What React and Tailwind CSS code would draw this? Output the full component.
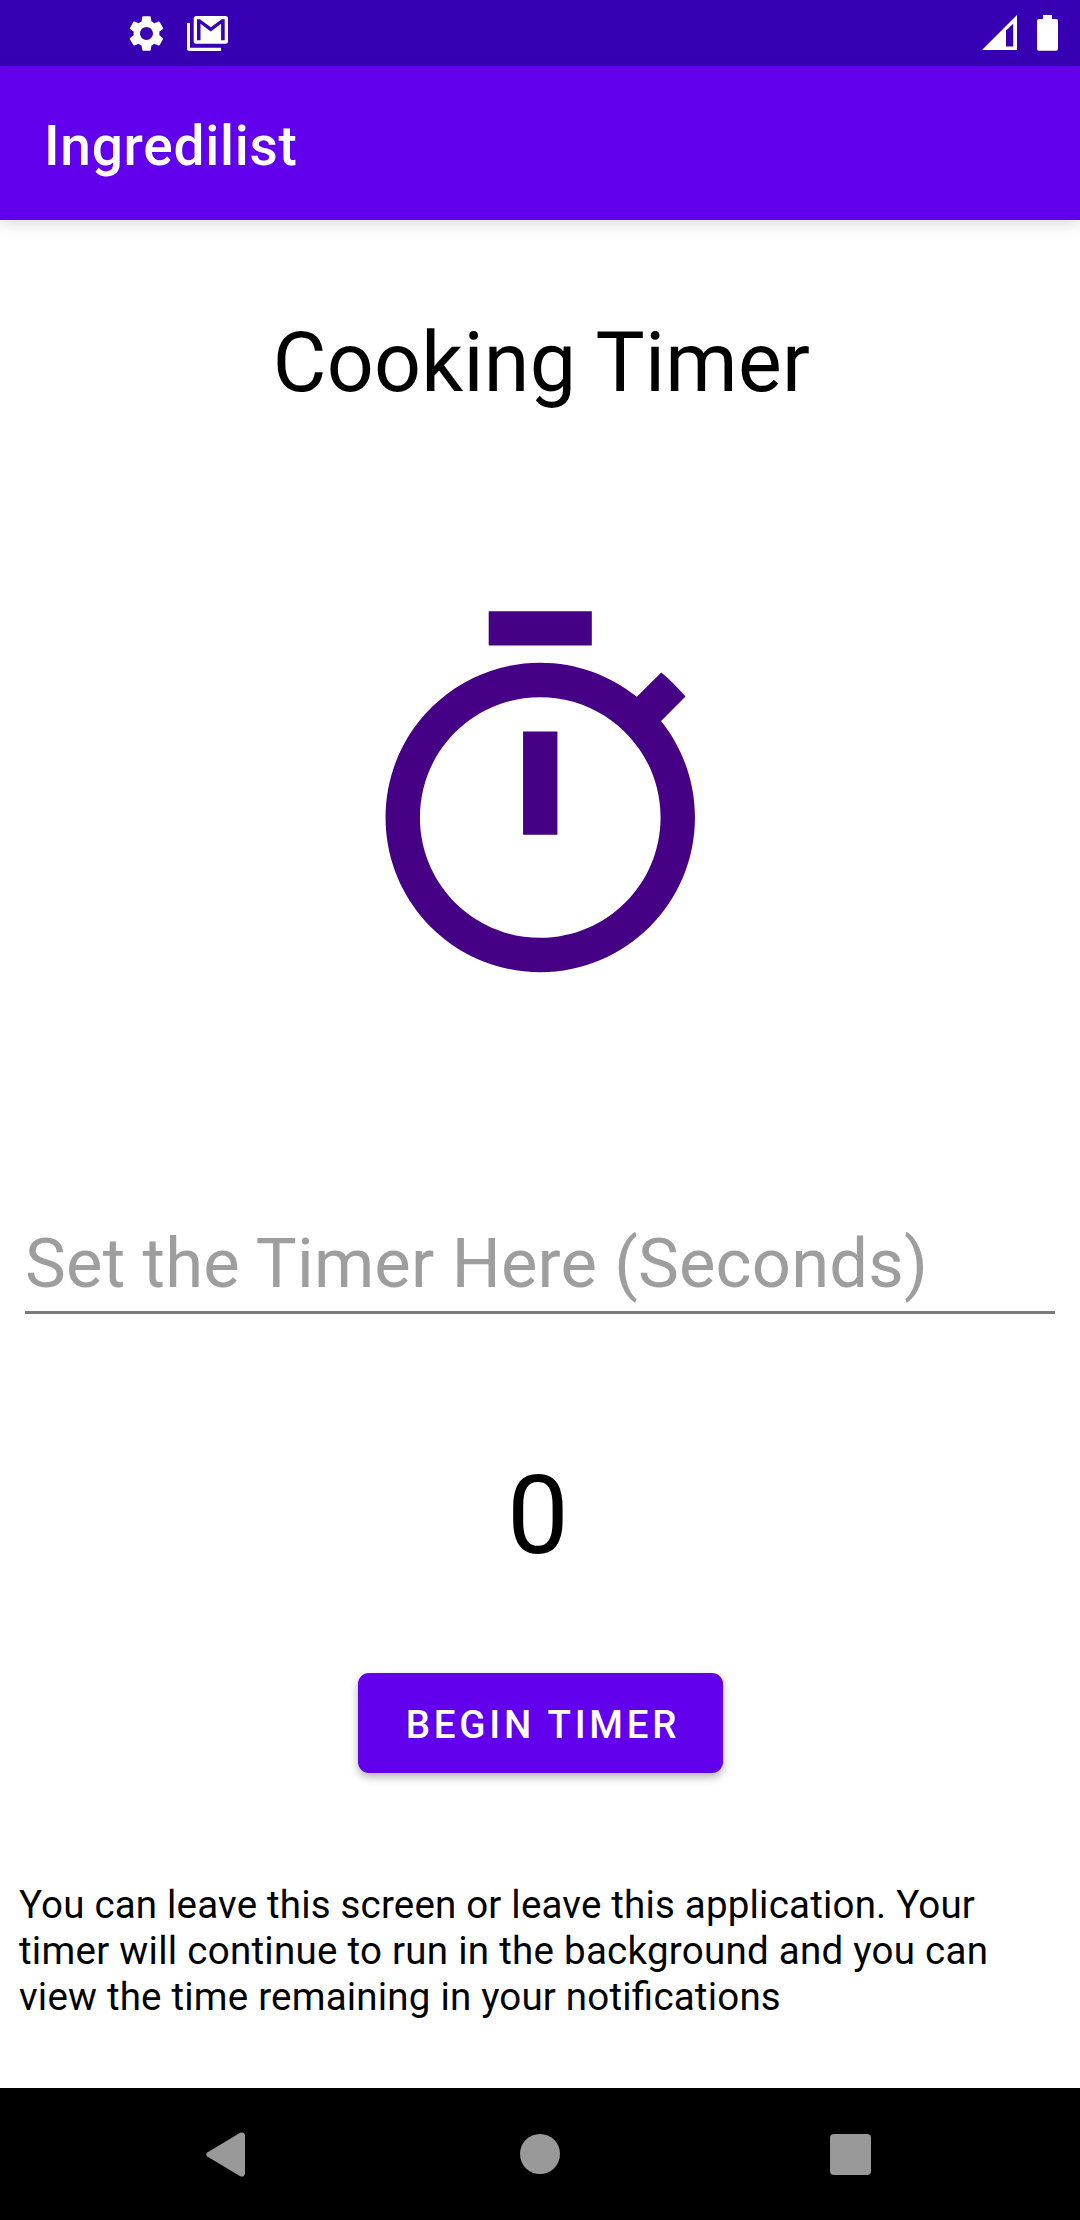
import { MdSettings } from "react-icons/md";

function GalleryMailIcon() {
  return (
    <svg className="ml-[19px] h-[35px] w-[41px]" viewBox="0 0 41 35" fill="white">
      <path d="M0 7h3v24.700h31V35H2.500A2.500 2.500 0 0 1 0 32.500z" />
      <path
        fillRule="evenodd"
        d="M9.200 0h29.300A2.500 2.500 0 0 1 41 2.500v22.700a2.500 2.500 0 0 1-2.500 2.500H9.200a2.500 2.500 0 0 1-2.500-2.500V2.500A2.500 2.500 0 0 1 9.200 0zM10 3.300v21h3.500V7.700l10.300 7.700 10.300-7.700v16.600h3.600v-21h-3l-10.900 8-10.900-8z"
      />
    </svg>
  );
}

function StatusBar() {
  return (
    <div className="flex h-[66px] w-full shrink-0 items-start bg-[#3700b3] pl-[125px] pr-[22px] text-white">
      <MdSettings className="mt-3 size-[43px]" />
      <div className="mt-4 flex">
        <GalleryMailIcon />
      </div>
      <div className="ml-auto mt-[15px] flex">
        <svg className="h-[35px] w-[35px]" viewBox="0 0 35 35" fill="white">
          <path fillRule="evenodd" d="M0 35L35 0v35zM24 15.500v16h7.200V8.700z" />
        </svg>
        <svg className="ml-5 h-9 w-[21px]" viewBox="0 0 21 36" fill="white">
          <path d="M6 0h9v4h4a2 2 0 0 1 2 2v27.700a2 2 0 0 1-2 2H2a2 2 0 0 1-2-2V6a2 2 0 0 1 2-2h4z" />
        </svg>
      </div>
    </div>
  );
}

function NavigationBar() {
  return (
    <nav className="flex h-[132px] w-full shrink-0 items-start bg-black pl-[206px] pr-[209px] pt-11">
      <button aria-label="Back">
        <svg className="block h-[45px] w-10" viewBox="0 0 40 45" fill="#999">
          <path d="M1.300 20.400L34.200.700Q38.500-.600 39 3.500V41.500Q38.500 45.500 34.200 44.300L1.300 24.600Q-.700 22.500 1.300 20.400z" />
        </svg>
      </button>
      <button aria-label="Home" className="ml-[274px] mt-0.5 size-10 rounded-full bg-[#999]" />
      <button aria-label="Recents" className="ml-auto mt-0.5 size-[41px] rounded-[4px] bg-[#999]" />
    </nav>
  );
}

export default function App() {
  return (
    <div className="flex h-[2220px] w-[1080px] flex-col overflow-hidden bg-white font-['Roboto',sans-serif] text-black">
      <StatusBar />
      <header className="z-10 flex h-[154px] shrink-0 items-center bg-[#6200ee] pl-11 pt-1.5 shadow-[0_4px_14px_rgba(0,0,0,0.14)]">
        <h1 className="text-[55px] font-medium leading-[64px] tracking-[0.750px] text-white">Ingredilist</h1>
      </header>
      <main className="flex grow flex-col items-center">
        <h2 className="mt-[87.500px] pl-[3px] text-[82.500px] leading-[110px] tracking-[0.300px]">Cooking Timer</h2>
        <svg className="ml-px mt-[176.500px] size-[412.500px] shrink-0" viewBox="0 0 24 24" fill="#460085">
          <path d="M15 1H9v2h6V1zM11 14h2V8h-2v6zM19.030 7.390l1.420-1.420c-.43-.51-.9-.99-1.410-1.410l-1.420 1.420C16.070 4.740 14.120 4 12 4c-4.970 0-9 4.030-9 9s4.020 9 9 9 9-4.030 9-9c0-2.120-.74-4.070-1.970-5.610zM12 20c-3.870 0-7-3.130-7-7s3.130-7 7-7 7 3.130 7 7-3.130 7-7 7z" />
        </svg>
        <div className="mt-[199.500px] flex h-[108px] w-[1030px] shrink-0 border-b-[3px] border-[#7a7a7a]">
          <input
            aria-label="Timer seconds"
            placeholder="Set the Timer Here (Seconds)"
            className="h-[105px] w-full bg-transparent pt-2.5 text-[68.750px] tracking-[0.180px] text-black outline-none placeholder:text-[#9e9e9e] placeholder:opacity-100"
          />
        </div>
        <div className="mt-[138px] pr-1 text-[110px] leading-[128px]">0</div>
        <button className="ml-px mt-[93px] h-[100px] w-[365px] shrink-0 rounded-[11px] bg-[#6200ee] pl-[5px] pt-[3px] text-[38.500px] font-medium tracking-[3.750px] text-white shadow-[0_4px_8px_rgba(0,0,0,0.3)]">
          BEGIN TIMER
        </button>
        <p className="mt-[109px] w-full pl-[19px] text-[38.500px] leading-[46px] [font-feature-settings:'liga'_1]">
          <span className="block tracking-[0.190px]">You can leave this screen or leave this application. Your</span>
          <span className="block tracking-[0.270px]">timer will continue to run in the background and you can</span>
          <span className="block tracking-[0.200px]">view the time remaining in your notifications</span>
        </p>
      </main>
      <NavigationBar />
    </div>
  );
}
